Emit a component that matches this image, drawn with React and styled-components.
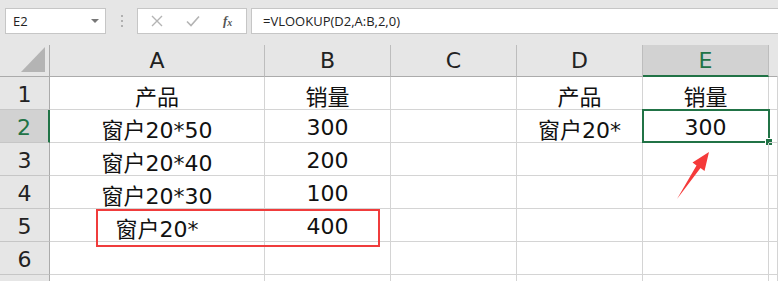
import React from 'react';
import styled, { createGlobalStyle } from 'styled-components';

const GlobalStyle = createGlobalStyle`
    * { box-sizing: border-box; }
    body {
        margin: 0;
        background: #ffffff;
        font-family: "DejaVu Sans", "Noto Sans CJK SC", sans-serif;
        overflow: hidden;
    }
`;

const COLS = ['A', 'B', 'C', 'D', 'E', ''];
const WIDTHS = '50px 215px 126px 126px 126px 126px 9px';

const rows = [
    ['产品', '销量', '', '产品', '销量'],
    ['窗户20*50', '300', '', '窗户20*', '300'],
    ['窗户20*40', '200', '', '', ''],
    ['窗户20*30', '100', '', '', ''],
    ['窗户20*', '400', '', '', ''],
    ['', '', '', '', ''],
    ['', '', '', '', ''],
];

const App = () => {
    return (
        <>
            <GlobalStyle />
            <Sheet>
                <Toolbar>
                    <NameBox>
                        <span>E2</span>
                        <DropArrow />
                    </NameBox>
                    <Grip>
                        <i /><i /><i />
                    </Grip>
                    <FormulaButtons>
                        <svg width="12" height="12" viewBox="0 0 12 12">
                            <path d="M1 1 L11 11 M11 1 L1 11" stroke="#b4b4b4" strokeWidth="1.4" fill="none" />
                        </svg>
                        <svg width="14" height="12" viewBox="0 0 14 12">
                            <path d="M1 6.5 L5 10.5 L13 1.5" stroke="#b4b4b4" strokeWidth="1.6" fill="none" />
                        </svg>
                        <Fx>f<sub>x</sub></Fx>
                    </FormulaButtons>
                    <FormulaInput>=VLOOKUP(D2,A:B,2,0)</FormulaInput>
                </Toolbar>

                <GridWrap>
                    <Grid>
                        <Corner>
                            <svg width="24" height="25" viewBox="0 0 24 25">
                                <polygon points="24,0 24,25 0,25" fill="#b4b4b4" />
                            </svg>
                        </Corner>
                        {COLS.map((c, i) => (
                            <ColHead key={c + i} $active={c === 'E'} $last={c === ''}>{c}</ColHead>
                        ))}
                        {rows.map((r, ri) => (
                            <React.Fragment key={ri}>
                                {/* row 7 is only a sliver at the bottom edge */}
                                <RowHead $active={ri === 1}>{ri < 6 ? ri + 1 : ''}</RowHead>
                                {r.map((v, ci) => (
                                    <Cell key={ci}>
                                        {v}
                                        {ri === 1 && ci === 4 && (
                                            <Selection>
                                                <Handle />
                                            </Selection>
                                        )}
                                    </Cell>
                                ))}
                                <Cell />
                            </React.Fragment>
                        ))}
                    </Grid>

                    <RedBox />
                    <Arrow width="40" height="56" viewBox="670 148 40 56">
                        <polygon
                            points="677,199 696.5,165.5 692.5,162.5 709,152 704.5,171 700.5,168"
                            fill="#f53a3a"
                        />
                    </Arrow>
                </GridWrap>
            </Sheet>
        </>
    );
};

const Sheet = styled.div`
    width: 778px;
    height: 281px;
    overflow: hidden;
    background: #e6e6e6;
`;

const Toolbar = styled.div`
    height: 45px;
    display: flex;
    align-items: flex-start;
    padding: 8px 0 0 5px;
    background: #e6e6e6;
`;

const NameBox = styled.div`
    width: 101px;
    height: 26px;
    background: #ffffff;
    border: 1px solid #c6c6c6;
    display: flex;
    align-items: center;
    justify-content: space-between;
    padding: 0 6px 0 7px;
    font-family: "Open Sans", "Noto Sans", sans-serif;
    font-size: 13px;
    color: #222;
`;

const DropArrow = styled.div`
    width: 0;
    height: 0;
    border-left: 4px solid transparent;
    border-right: 4px solid transparent;
    border-top: 4px solid #777;
`;

const Grip = styled.div`
    width: 31px;
    height: 26px;
    display: flex;
    flex-direction: column;
    align-items: center;
    justify-content: center;
    gap: 3px;
    i {
        display: block;
        width: 2px;
        height: 2px;
        background: #b0b0b0;
    }
`;

const FormulaButtons = styled.div`
    width: 110px;
    height: 26px;
    background: #ffffff;
    border: 1px solid #c6c6c6;
    display: flex;
    align-items: center;
    padding: 0 10px 0 13px;
    gap: 23px;
`;

const Fx = styled.span`
    font-family: "Liberation Serif", serif;
    font-style: italic;
    font-weight: bold;
    font-size: 13px;
    color: #555;
    sub {
        font-size: 10px;
        vertical-align: -1px;
    }
`;

const FormulaInput = styled.div`
    flex: 1;
    height: 26px;
    margin-left: 4px;
    background: #ffffff;
    border: 1px solid #c6c6c6;
    border-right: none;
    display: flex;
    align-items: center;
    padding-left: 11px;
    font-family: "Open Sans", "Noto Sans", sans-serif;
    font-size: 13px;
    color: #222;
`;

const GridWrap = styled.div`
    position: relative;
`;

const Grid = styled.div`
    display: grid;
    grid-template-columns: ${WIDTHS};
    grid-template-rows: 32px repeat(7, 33px);
    background: #ffffff;
`;

const Corner = styled.div`
    background: #e6e6e6;
    border-right: 1px solid #ababab;
    border-bottom: 1px solid #ababab;
    display: flex;
    align-items: flex-end;
    justify-content: flex-end;
    padding: 0 4px 4px 0;
`;

const ColHead = styled.div`
    background: ${p => (p.$active ? '#d2d2d2' : '#e6e6e6')};
    color: ${p => (p.$active ? '#217346' : '#222')};
    border-right: 1px solid ${p => (p.$last ? 'transparent' : '#bdbdbd')};
    border-bottom: ${p => (p.$active ? '2px solid #217346' : '1px solid #ababab')};
    display: flex;
    align-items: center;
    justify-content: center;
    font-size: 22px;
    padding-top: ${p => (p.$active ? '1px' : '0')};
`;

const RowHead = styled.div`
    background: ${p => (p.$active ? '#d2d2d2' : '#e6e6e6')};
    color: ${p => (p.$active ? '#217346' : '#222')};
    border-right: ${p => (p.$active ? '2px solid #217346' : '1px solid #ababab')};
    border-bottom: 1px solid #c6c6c6;
    display: flex;
    align-items: center;
    justify-content: center;
    padding-top: 3px;
    font-size: 22px;
`;

const Cell = styled.div`
    position: relative;
    border-right: 1px solid #d4d4d4;
    border-bottom: 1px solid #d4d4d4;
    display: flex;
    align-items: center;
    justify-content: center;
    padding-top: 3px;
    font-size: 22px;
    color: #111;
    white-space: nowrap;
    overflow: visible;
`;

const Selection = styled.div`
    position: absolute;
    left: -1px;
    top: -1px;
    right: -2px;
    bottom: -1px;
    border: 2px solid #217346;
    pointer-events: none;
`;

const Handle = styled.div`
    position: absolute;
    right: -4px;
    bottom: -4px;
    width: 6px;
    height: 6px;
    background: #217346;
    outline: 1px solid #ffffff;
`;

const RedBox = styled.div`
    position: absolute;
    left: 96px;
    top: 164px;
    width: 284px;
    height: 38px;
    border: 2px solid #f03c3c;
`;

const Arrow = styled.svg`
    position: absolute;
    left: 670px;
    top: 103px;
`;

export default App;
